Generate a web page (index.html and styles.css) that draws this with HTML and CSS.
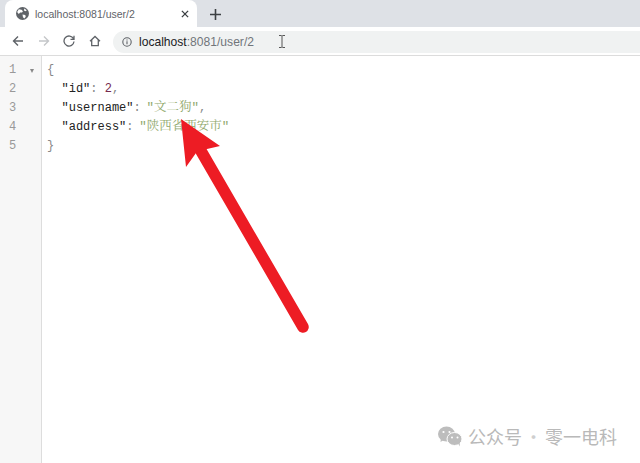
FILE: index.html
```html
<!DOCTYPE html>
<html lang="zh">
<head>
<meta charset="utf-8">
<title>localhost:8081/user/2</title>
<link rel="stylesheet" href="styles.css">
</head>
<body>
<div class="browser">
  <div class="tabstrip">
    <div class="tab">
      <svg class="globe" width="13" height="13" viewBox="0 0 14 14"><circle cx="7" cy="7" r="7" fill="#5f6368"/><path d="M3 2.500l3 .5 1.500 1.500-1 1.500H4.500L3 7.500 1.200 5.500zM7 8l3 .5.500 2-1.500 2-1.500-1.500zM9 1.500l2.500 2-1 1-2-.8z" fill="#fff"/></svg>
      <span class="tab-title">localhost:8081/user/2</span>
      <svg class="close" width="8" height="8" viewBox="0 0 9 9"><path d="M1 1l7 7M8 1L1 8" stroke="#3c4043" stroke-width="1.500"/></svg>
    </div>
    <svg class="plus" width="11" height="11" viewBox="0 0 11 11"><path d="M5.500 0v11M0 5.500h11" stroke="#3c4043" stroke-width="1.600"/></svg>
  </div>
  <div class="toolbar">
    <div class="navs">
      <svg width="12" height="12" viewBox="0 0 12 12"><path d="M11 6H1.500M6 1.500L1.500 6 6 10.500" fill="none" stroke="#5f6368" stroke-width="1.400"/></svg>
      <svg width="12" height="12" viewBox="0 0 12 12"><path d="M1 6h9.500M6 1.500L10.500 6 6 10.500" fill="none" stroke="#c4c6c9" stroke-width="1.400"/></svg>
      <svg width="12" height="12" viewBox="0 0 12 12"><path d="M10.500 3.800A5 5 0 1 0 11 6.500M11 .8v3.500H7.500" fill="none" stroke="#5f6368" stroke-width="1.300"/></svg>
      <svg width="12" height="12" viewBox="0 0 12 12"><path d="M1 6.200L6 1.500l5 4.700M2.700 5v5.700h6.600V5" fill="none" stroke="#5f6368" stroke-width="1.300"/></svg>
    </div>
    <div class="omnibox">
      <svg width="10" height="10" viewBox="0 0 10 10"><circle cx="5" cy="5" r="4.200" fill="none" stroke="#5f6368" stroke-width="1.100"/><path d="M5 4.300v3M5 2.500v1" stroke="#5f6368" stroke-width="1.100"/></svg>
      <span class="url"><span class="host">localhost</span>:8081/user/2</span>
      <svg class="caret" width="6" height="13" viewBox="0 0 6 13"><path d="M0 .5h2.200L3 1.200 3.800.5H6M3 1.200v10.600M0 12.500h2.200l.8-.7.800.7H6" fill="none" stroke="#444" stroke-width=".9"/></svg>
    </div>
  </div>
  <div class="viewer">
    <div class="gutter">
      <div class="gutter-line"><span>1</span><i class="fold"></i></div>
      <div class="gutter-line"><span>2</span></div>
      <div class="gutter-line"><span>3</span></div>
      <div class="gutter-line"><span>4</span></div>
      <div class="gutter-line"><span>5</span></div>
    </div>
    <div class="code">
      <div class="line"><span class="punc">{</span></div>
      <div class="line indent"><span class="key">"id"</span><span class="punc">: </span><span class="num">2</span><span class="punc">,</span></div>
      <div class="line indent"><span class="key">"username"</span><span class="punc">: </span><span class="str">"文二狗"</span><span class="punc">,</span></div>
      <div class="line indent"><span class="key">"address"</span><span class="punc">: </span><span class="str">"陕西省西安市"</span></div>
      <div class="line"><span class="punc">}</span></div>
    </div>
  </div>
</div>
<svg class="arrow" width="640" height="463" viewBox="0 0 640 463">
  <path d="M303 327L201 151" fill="none" stroke="#ed1c24" stroke-width="11.500" stroke-linecap="round"/>
  <path d="M181 119L220 146 207 149 196 153 186 167z" fill="#ed1c24"/>
</svg>
<div class="watermark">
  <svg width="26" height="21" viewBox="0 0 26 21"><ellipse cx="9.500" cy="8" rx="8.500" ry="7.500" fill="#bdbdbd"/><path d="M4 12l-.5 4 4-2.500z" fill="#bdbdbd"/><ellipse cx="17.500" cy="13" rx="7.500" ry="6.500" fill="#bdbdbd" stroke="#fff" stroke-width="1"/><path d="M21 17.500l2 3-.5-4.500z" fill="#bdbdbd"/><circle cx="6.500" cy="6" r="1.100" fill="#fff"/><circle cx="12.500" cy="6" r="1.100" fill="#fff"/><circle cx="15" cy="11.500" r="1" fill="#fff"/><circle cx="20.500" cy="11.500" r="1" fill="#fff"/></svg>
  <span>公众号<span class="dot"> · </span>零一电科</span>
</div>
</body>
</html>
```
FILE: styles.css
```css
html, body {
  margin: 0;
  padding: 0;
  width: 640px;
  height: 463px;
  overflow: hidden;
  background: #fff;
}
.browser {
  display: flex;
  flex-direction: column;
  height: 463px;
  font-family: "Liberation Sans", Arial, sans-serif;
}
.tabstrip {
  flex: 0 0 27px;
  display: flex;
  align-items: flex-end;
  gap: 13px;
  background: #dee1e6;
  box-sizing: border-box;
  padding-left: 5px;
}
.tab {
  width: 192px;
  height: 27px;
  box-sizing: border-box;
  background: #fff;
  border-radius: 8px 8px 0 0;
  display: flex;
  align-items: center;
  padding: 0 8px 0 11px;
  gap: 6px;
}
.tab-title {
  flex: 1;
  font-size: 10.500px;
  color: #5f6368;
  white-space: nowrap;
}
.plus {
  align-self: center;
  margin-top: 1px;
}
.toolbar {
  flex: 0 0 28px;
  display: flex;
  align-items: center;
  background: #fff;
  border-bottom: 1px solid #dcdcdc;
}
.navs {
  display: flex;
  align-items: center;
  gap: 13.500px;
  padding-left: 12px;
  width: 101px;
  box-sizing: content-box;
}
.omnibox {
  flex: 1;
  height: 22px;
  margin-top: 1px;
  display: flex;
  align-items: center;
  gap: 7px;
  padding-left: 9px;
  background: #f0f2f2;
  border-radius: 11px 0 0 11px;
}
.url {
  font-size: 12.100px;
  color: #70757a;
  width: 134px;
  white-space: nowrap;
}
.host {
  color: #202124;
}
.caret {
  margin-left: -1px;
}
.viewer {
  flex: 1;
  display: flex;
  min-height: 0;
}
.gutter {
  flex: 0 0 41px;
  background: #f7f7f7;
  border-right: 1px solid #ddd;
  padding-top: 5px;
  font-family: "Liberation Mono", monospace;
  font-size: 12px;
  color: #999;
}
.gutter-line {
  height: 19px;
  line-height: 19px;
  padding-left: 9px;
  display: flex;
  align-items: center;
  gap: 14px;
}
.fold {
  width: 0;
  height: 0;
  border-left: 2.500px solid transparent;
  border-right: 2.500px solid transparent;
  border-top: 4px solid #888;
}
.code {
  padding: 5px 0 0 5px;
  font-family: "Liberation Mono", "Noto Sans CJK SC", monospace;
  font-size: 12px;
}
.line {
  height: 19px;
  line-height: 19px;
  white-space: pre;
}
.indent {
  padding-left: 14.500px;
}
.key {
  color: #222;
}
.punc {
  color: #888;
}
.num {
  color: #762a4e;
}
.str {
  color: #8fa86c;
  font-size: 12.500px;
  margin-left: -1.500px;
  font-family: "Liberation Mono", "Noto Serif CJK SC", "Noto Sans CJK SC", monospace;
}
.arrow {
  position: absolute;
  left: 0;
  top: 0;
  pointer-events: none;
}
.watermark {
  position: absolute;
  left: 437px;
  top: 424px;
  display: flex;
  align-items: center;
  gap: 5px;
  font-family: "Noto Sans CJK SC", sans-serif;
  font-size: 18px;
  line-height: 24px;
  color: #b9b9b9;
  white-space: nowrap;
}
.dot {
  margin: 0 -1.500px;
  color: #cfcfcf;
}
```
